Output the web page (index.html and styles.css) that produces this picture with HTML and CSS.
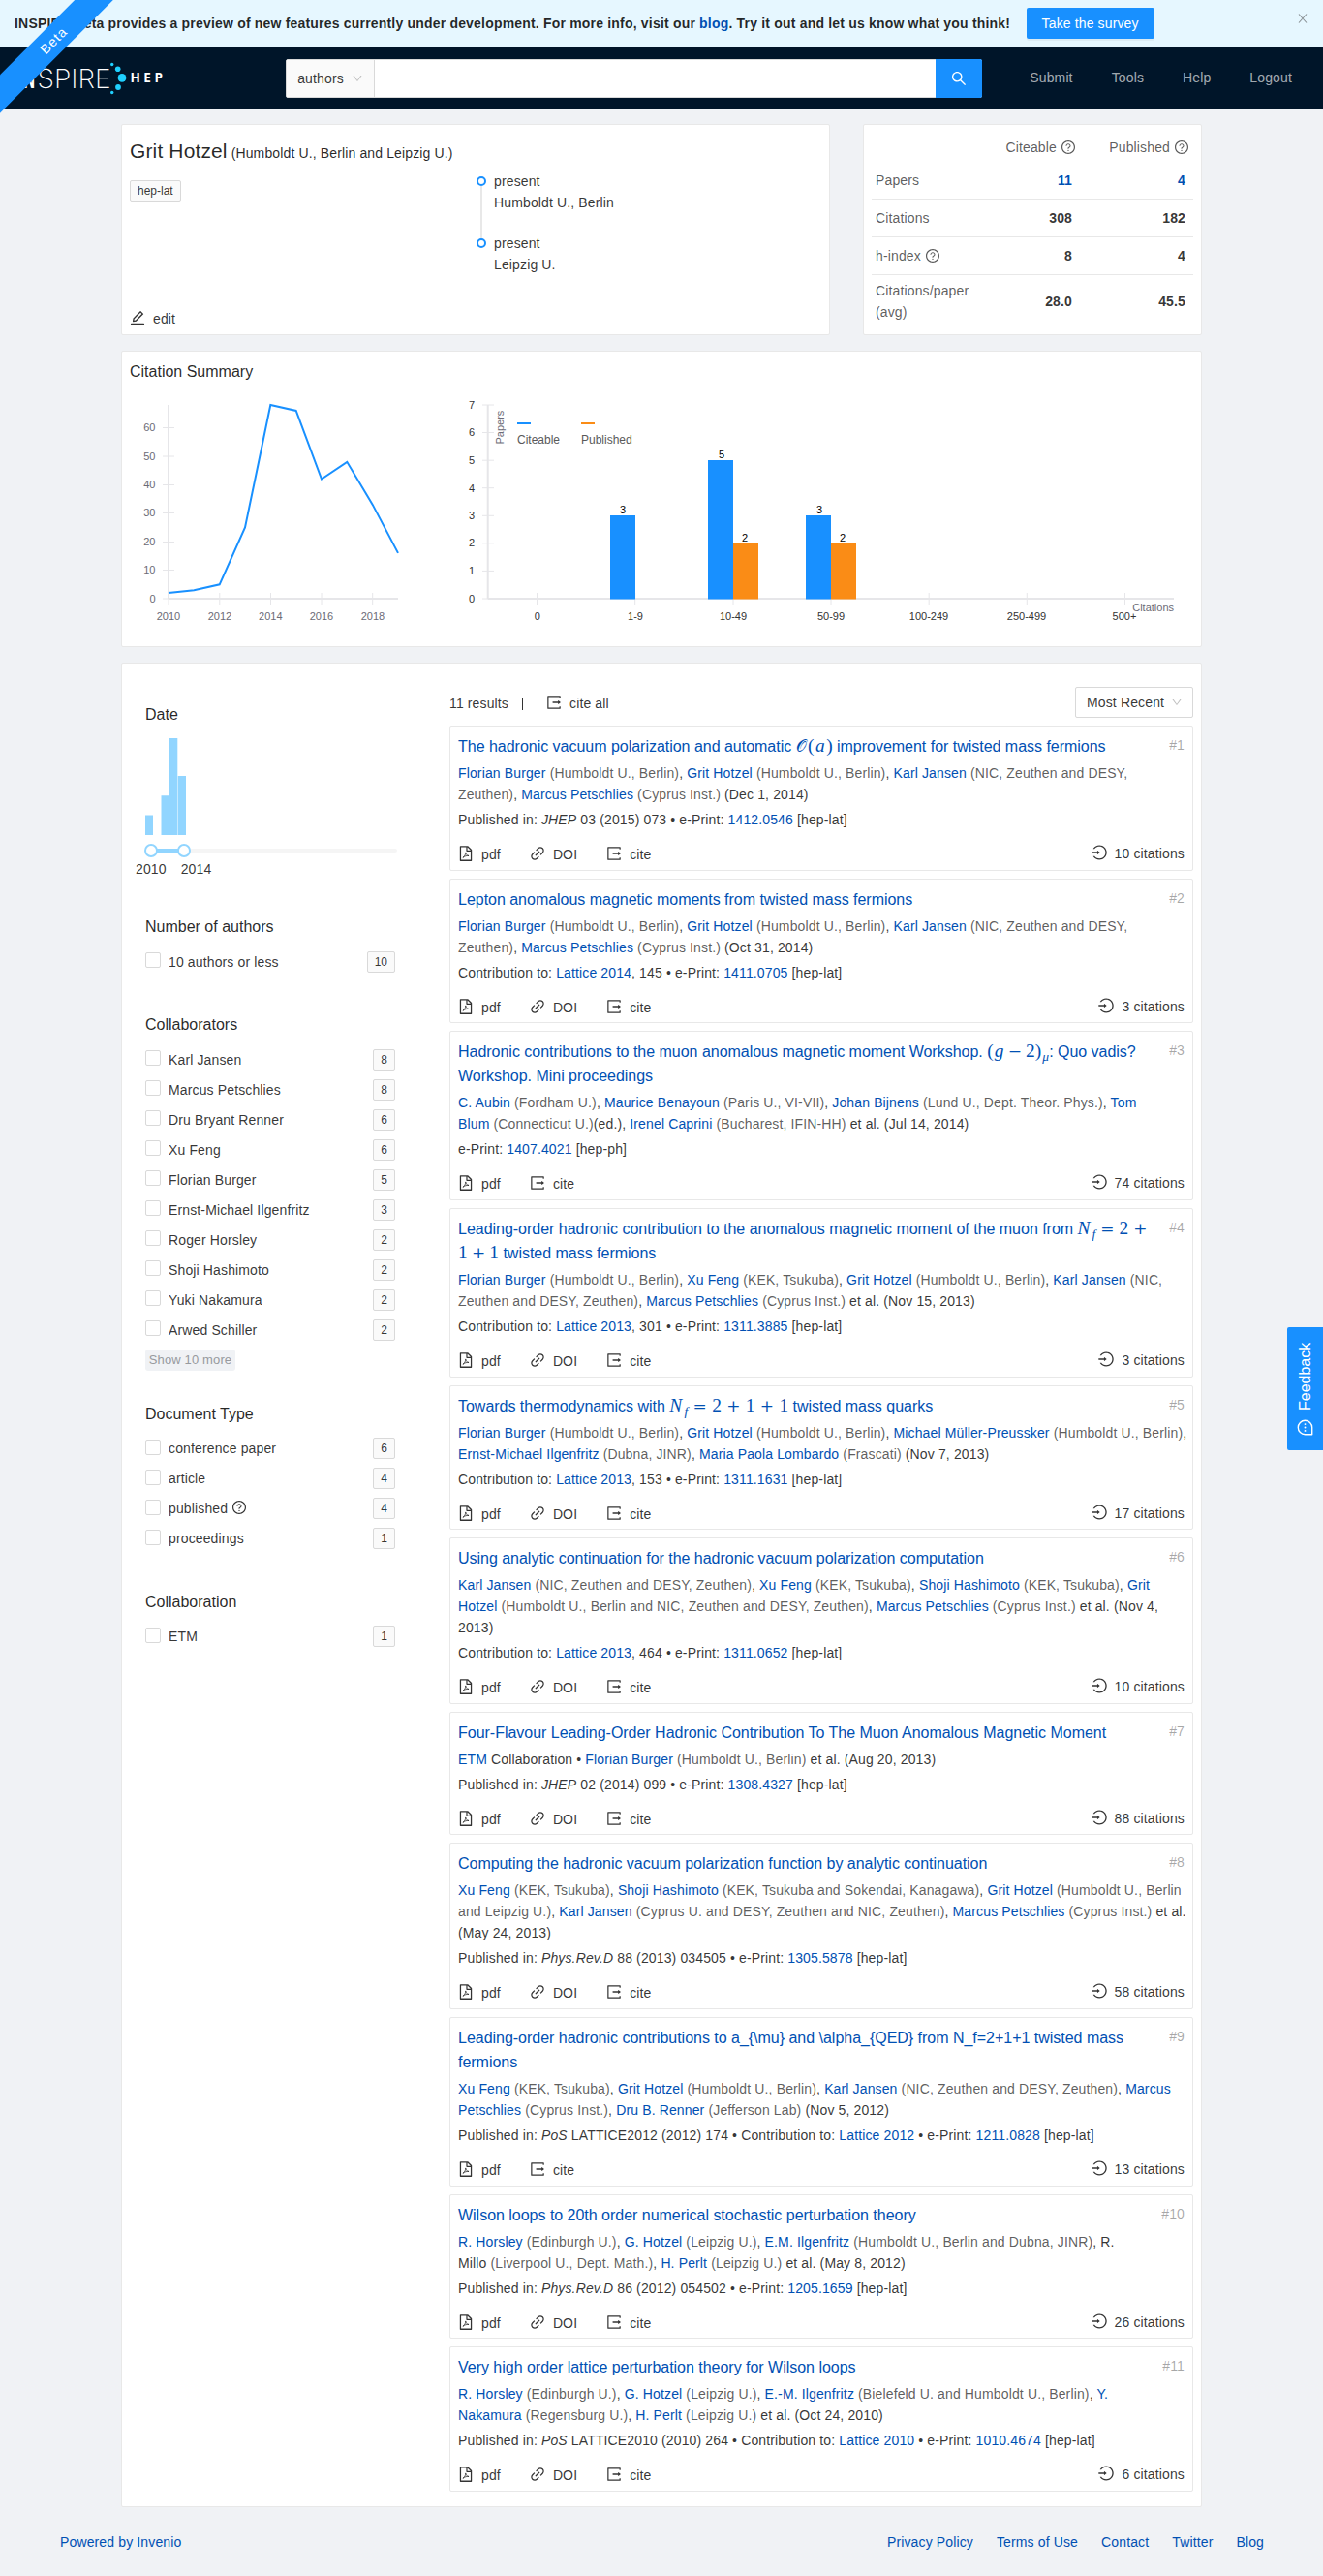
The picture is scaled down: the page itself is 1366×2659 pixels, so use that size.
FILE: index.html
```html
<!DOCTYPE html>
<html lang="en">
<head>
<meta charset="utf-8">
<title>Grit Hotzel - INSPIRE</title>
<link rel="stylesheet" href="styles.css">
</head>
<body>
<svg class="sprite" width="0" height="0" aria-hidden="true">
  <symbol id="i-help" viewBox="0 0 1024 1024"><path d="M512 64C264.6 64 64 264.6 64 512s200.6 448 448 448 448-200.6 448-448S759.4 64 512 64zm0 820c-205.4 0-372-166.6-372-372s166.6-372 372-372 372 166.6 372 372-166.6 372-372 372z"/><path d="M623.6 316.7C593.6 290.4 554 276 512 276s-81.6 14.5-111.6 40.7C369.2 344 352 380.7 352 420v7.6c0 4.4 3.6 8 8 8h48c4.4 0 8-3.6 8-8V420c0-44.1 43.1-80 96-80s96 35.9 96 80c0 31.1-22 59.6-56.1 72.7-21.2 8.1-39.2 22.3-52.1 40.9-13.1 19-19.9 41.8-19.9 64.9V620c0 4.4 3.6 8 8 8h48c4.4 0 8-3.6 8-8v-22.7a48.3 48.3 0 0 1 30.9-44.8c59-22.7 97.1-74.7 97.1-132.5.1-39.3-17.1-76-48.3-103.3zM472 732a40 40 0 1 0 80 0 40 40 0 1 0-80 0z"/></symbol>
  <symbol id="i-search" viewBox="0 0 1024 1024"><path d="M909.6 854.5L649.9 594.8C690.2 542.7 712 479 712 412c0-80.2-31.3-155.4-87.9-212.1-56.6-56.7-132-87.9-212.1-87.9s-155.5 31.3-212.1 87.9C143.2 256.5 112 331.8 112 412c0 80.1 31.3 155.5 87.9 212.1C256.5 680.8 331.8 712 412 712c67 0 130.6-21.8 182.7-62l259.7 259.6a8.2 8.2 0 0 0 11.6 0l43.6-43.5a8.2 8.2 0 0 0 0-11.6zM570.4 570.4C528 612.7 471.8 636 412 636s-116-23.3-158.4-65.6C211.3 528 188 471.8 188 412s23.3-116.1 65.6-158.4C296 211.3 352.2 188 412 188s116.1 23.2 158.4 65.6S636 352.2 636 412s-23.3 116.1-65.6 158.4z"/></symbol>
  <symbol id="i-down" viewBox="0 0 1024 1024"><path d="M884 256h-75c-5.1 0-9.9 2.5-12.9 6.6L512 654.2 227.9 262.6c-3-4.1-7.8-6.6-12.9-6.6h-75c-6.5 0-10.3 7.4-6.5 12.7l352.6 486.1c12.8 17.6 39 17.6 51.7 0l352.6-486.1c3.9-5.3.1-12.7-6.4-12.7z"/></symbol>
  <symbol id="i-edit" viewBox="0 0 1024 1024"><path d="M257.7 752c2 0 4-.2 6-.5L431.9 722c2-.4 3.9-1.3 5.3-2.8l423.9-423.9a9.96 9.96 0 0 0 0-14.1L694.9 114.9c-1.9-1.9-4.4-2.9-7.1-2.9s-5.2 1-7.1 2.9L256.8 538.8c-1.5 1.5-2.4 3.3-2.8 5.3l-29.5 168.2a33.5 33.5 0 0 0 9.4 29.8c6.6 6.4 14.9 9.9 23.8 9.9zm67.4-174.4L687.8 215l73.3 73.3-362.7 362.6-88.9 15.7 15.6-89zM880 836H144c-17.7 0-32 14.3-32 32v36c0 4.4 3.6 8 8 8h784c4.4 0 8-3.6 8-8v-36c0-17.7-14.3-32-32-32z"/></symbol>
  <symbol id="i-link" viewBox="0 0 1024 1024"><path d="M574 665.4a8.03 8.03 0 0 0-11.3 0L446.5 781.6c-53.8 53.8-144.6 59.5-204 0-59.5-59.5-53.8-150.2 0-204l116.2-116.2c3.1-3.1 3.1-8.2 0-11.3l-39.8-39.8a8.03 8.03 0 0 0-11.3 0L191.4 526.5c-84.6 84.6-84.6 221.5 0 306s221.5 84.6 306 0l116.2-116.2c3.1-3.1 3.1-8.2 0-11.3L574 665.4zm258.6-474c-84.6-84.6-221.5-84.6-306 0L410.3 307.6a8.03 8.03 0 0 0 0 11.3l39.7 39.7c3.1 3.1 8.2 3.1 11.3 0l116.2-116.2c53.8-53.8 144.6-59.5 204 0 59.5 59.5 53.8 150.2 0 204L665.3 562.6a8.03 8.03 0 0 0 0 11.3l39.8 39.8c3.1 3.1 8.2 3.1 11.3 0l116.2-116.2c84.5-84.6 84.5-221.5 0-306.1zM610.1 372.3a8.03 8.03 0 0 0-11.3 0L372.3 598.7a8.03 8.03 0 0 0 0 11.3l39.6 39.6c3.1 3.1 8.2 3.1 11.3 0l226.4-226.4c3.1-3.1 3.1-8.2 0-11.3l-39.5-39.6z"/></symbol>
  <symbol id="i-export" viewBox="0 0 1024 1024"><path d="M888.3 757.4h-53.8c-4.2 0-7.7 3.5-7.7 7.7v61.8H197.1V197.1h629.8v61.8c0 4.2 3.5 7.7 7.7 7.7h53.8c4.2 0 7.7-3.4 7.7-7.7V158.7c0-17-13.7-30.7-30.7-30.7H158.7c-17 0-30.7 13.7-30.7 30.7v706.6c0 17 13.7 30.7 30.7 30.7h706.6c17 0 30.7-13.7 30.7-30.7V765.1c0-4.3-3.5-7.7-7.7-7.7zm18.6-251.7L765 393.7c-5.3-4.2-13-.4-13 6.3v76H438c-4.4 0-8 3.6-8 8v56c0 4.4 3.6 8 8 8h314v76c0 6.7 7.8 10.5 13 6.3l141.9-112a8 8 0 0 0 0-12.6z"/></symbol>
  <symbol id="i-login" viewBox="0 0 1024 1024"><path d="M521.7 82c-152.5-.4-286.7 78.5-363.4 197.7-3.4 5.3.4 12.3 6.7 12.3h70.3c4.8 0 9.3-2.1 12.3-5.8 7-8.5 14.5-16.7 22.4-24.5 32.6-32.5 70.5-58.1 112.7-75.9 43.6-18.4 90-27.8 137.9-27.8 47.9 0 94.3 9.3 137.9 27.8 42.2 17.8 80.1 43.4 112.7 75.9 32.6 32.5 58.1 70.4 76 112.5C865.7 417.8 875 464.1 875 512c0 47.9-9.4 94.2-27.8 137.8-17.8 42.1-43.4 80-76 112.5s-70.5 58.1-112.7 75.9A352.8 352.8 0 0 1 520.6 866c-47.9 0-94.3-9.4-137.9-27.8A353.84 353.84 0 0 1 270 762.3c-7.9-7.9-15.3-16.1-22.4-24.5-3-3.7-7.6-5.8-12.3-5.8H165c-6.3 0-10.2 7-6.7 12.3C234.9 863.2 368.5 942 520.6 942c236.2 0 428-190.1 430.4-425.6C953.4 277.1 761.3 82.6 521.7 82zM395.02 624v-76h-314c-4.4 0-8-3.6-8-8v-56c0-4.4 3.6-8 8-8h314v-76c0-6.7 7.8-10.5 13-6.3l141.9 112a8 8 0 0 1 0 12.6l-141.9 112c-5.2 4.1-13 .4-13-6.3z"/></symbol>
  <symbol id="i-pdf" viewBox="0 0 1024 1024"><path d="M854.6 288.6L639.4 73.4c-6-6-14.1-9.4-22.6-9.4H192c-17.7 0-32 14.3-32 32v832c0 17.7 14.3 32 32 32h640c17.7 0 32-14.3 32-32V311.3c0-8.5-3.4-16.7-9.4-22.7zM790.2 326H602V137.8L790.2 326zm1.8 562H232V136h302v216a42 42 0 0 0 42 42h216v494z"/><path d="M335 760c90-50 170-190 165-310 10 110 70 190 185 200-120-10-250 20-350 110z" fill="none" stroke="currentColor" stroke-width="44" stroke-linejoin="round"/></symbol>
</svg>

<div class="ribbon">Beta</div>

<div class="banner">
  <strong>INSPIRE Beta provides a preview of new features currently under development. For more info, visit our <a>blog</a>. Try it out and let us know what you think!</strong>
  <a class="survey">Take the survey</a>
  <svg class="close" viewBox="0 0 10 10"><path d="M1 .5l8 9M9 .5l-8 9" fill="none" stroke="currentColor" stroke-width="1.1"/></svg>
</div>

<header class="nav">
  <svg class="logo" width="150" height="40" viewBox="0 0 150 40">
    <text class="logo-in" x="0" y="31" textLength="16" lengthAdjust="spacingAndGlyphs">IN</text>
    <text class="logo-spire" x="18.5" y="31" textLength="76" lengthAdjust="spacingAndGlyphs">SPIRE</text>
    <g class="logo-dots"><circle cx="95.7" cy="6.5" r="1.7"/><circle cx="101.7" cy="11.3" r="2.8"/><circle cx="106" cy="20.3" r="4.4"/><circle cx="102" cy="30" r="2.9"/><circle cx="95.7" cy="35.5" r="1.7"/></g>
    <text class="logo-hep" x="114.5" y="25.2">HEP</text>
  </svg>
  <div class="search">
    <div class="scope">authors <svg class="caret"><use href="#i-down"/></svg></div>
    <div class="query"></div>
    <div class="go"><svg><use href="#i-search"/></svg></div>
  </div>
  <nav class="menu"><a>Submit</a><a>Tools</a><a>Help</a><a>Logout</a></nav>
</header>

<main class="page">
  <section class="top">
    <div class="card author">
      <h2>Grit Hotzel <small>(Humboldt U., Berlin and Leipzig U.)</small></h2>
      <div class="author-body">
        <div><span class="tag">hep-lat</span></div>
        <ul class="timeline">
          <li>present<br>Humboldt U., Berlin</li>
          <li>present<br>Leipzig U.</li>
        </ul>
      </div>
      <a class="act edit"><svg><use href="#i-edit"/></svg>edit</a>
    </div>
    <div class="card stats">
      <table>
        <tr class="head"><td></td><td>Citeable <svg class="help"><use href="#i-help"/></svg></td><td>Published <svg class="help"><use href="#i-help"/></svg></td></tr>
        <tr><td>Papers</td><td><a>11</a></td><td><a>4</a></td></tr>
        <tr><td>Citations</td><td>308</td><td>182</td></tr>
        <tr><td>h-index <svg class="help"><use href="#i-help"/></svg></td><td>8</td><td>4</td></tr>
        <tr class="avg"><td>Citations/paper (avg)</td><td>28.0</td><td>45.5</td></tr>
      </table>
    </div>
  </section>

  <section class="card summary">
    <h3>Citation Summary</h3>
    <div class="charts">
      <svg class="chart years" width="300" height="250" viewBox="126 405 300 250">
        <path class="axis" d="M174 418V618M174 618H411"/>
        <path class="tick" d="M168 441.5h12M168 471h12M168 500.5h12M168 529.5h12M168 559.5h12M168 588.5h12M168 618h12M174 612v12M226.8 612v12M279.5 612v12M332 612v12M384.7 612v12"/>
        <polyline class="line" points="174,612.1 200.3,609.2 226.7,603.3 253,544.5 279.3,418 305.7,423.9 332,494.5 358.3,476.8 384.7,520.9 411,570.9"/>
        <g class="lab-y"><text x="160.5" y="445">60</text><text x="160.5" y="474.5">50</text><text x="160.5" y="504">40</text><text x="160.5" y="533">30</text><text x="160.5" y="563">20</text><text x="160.5" y="592">10</text><text x="160.5" y="622">0</text></g>
        <g class="lab-x"><text x="174" y="640">2010</text><text x="227" y="640">2012</text><text x="279.3" y="640">2014</text><text x="332" y="640">2016</text><text x="385" y="640">2018</text></g>
      </svg>
      <svg class="chart bars" width="760" height="250" viewBox="470 405 760 250">
        <path class="axis" d="M503.7 418V618M503.7 618H1212"/>
        <path class="tick" d="M498 418h12M498 446.5h12M498 475.2h12M498 503.7h12M498 532.3h12M498 560.8h12M498 589.4h12M498 618h12M554.5 612v12M655.7 612v12M757 612v12M858 612v12M959.2 612v12M1060.3 612v12M1161.5 612v12"/>
        <g class="blue"><rect x="630" y="532" width="26" height="86.5"/><rect x="731" y="475" width="26" height="143.5"/><rect x="832" y="532" width="26" height="86.5"/></g>
        <g class="orange"><rect x="757" y="560.5" width="26" height="58"/><rect x="858" y="560.5" width="26" height="58"/></g>
        <g class="lab-y"><text x="490" y="422">7</text><text x="490" y="450">6</text><text x="490" y="479">5</text><text x="490" y="507.500">4</text><text x="490" y="536">3</text><text x="490" y="564">2</text><text x="490" y="593">1</text><text x="490" y="622">0</text></g>
        <g class="lab-x"><text x="554.7" y="640">0</text><text x="656" y="640">1-9</text><text x="757" y="640">10-49</text><text x="858" y="640">50-99</text><text x="959" y="640">100-249</text><text x="1060" y="640">250-499</text><text x="1161" y="640">500+</text></g>
        <g class="val"><text x="643" y="530">3</text><text x="745" y="473">5</text><text x="769" y="559">2</text><text x="846" y="530">3</text><text x="870" y="559">2</text></g>
        <text class="cap" x="1212" y="631" text-anchor="end">Citations</text>
        <text class="cap" transform="translate(520 458.500) rotate(-90)">Papers</text>
        <path d="M534 437h14" stroke="#1890ff" stroke-width="2"/><path d="M600 437h14" stroke="#fa8c16" stroke-width="2"/>
        <text class="leg" x="534" y="458">Citeable</text><text class="leg" x="600" y="458">Published</text>
      </svg>
    </div>
  </section>

  <section class="card results">
    <aside class="facets">
      <div class="facet date">
        <h3>Date</h3>
        <svg class="hist" width="260" height="100"><path d="M0 79.500h8V100H0zM16.500 59.300h8.500V100h-8.500zM25 0h8.300v100H25zM33.800 39h8.200v61h-8.200z"/></svg>
        <div class="slider"><i></i><i></i></div>
        <div class="range"><span>2010</span><span>2014</span></div>
      </div>
      <div class="facet"><h3>Number of authors</h3>
        <label><i></i>10 authors or less<b>10</b></label></div>
      <div class="facet more"><h3>Collaborators</h3>
        <label><i></i>Karl Jansen<b>8</b></label>
        <label><i></i>Marcus Petschlies<b>8</b></label>
        <label><i></i>Dru Bryant Renner<b>6</b></label>
        <label><i></i>Xu Feng<b>6</b></label>
        <label><i></i>Florian Burger<b>5</b></label>
        <label><i></i>Ernst-Michael Ilgenfritz<b>3</b></label>
        <label><i></i>Roger Horsley<b>2</b></label>
        <label><i></i>Shoji Hashimoto<b>2</b></label>
        <label><i></i>Yuki Nakamura<b>2</b></label>
        <label><i></i>Arwed Schiller<b>2</b></label>
        <span class="show">Show 10 more</span></div>
      <div class="facet"><h3>Document Type</h3>
        <label><i></i>conference paper<b>6</b></label>
        <label><i></i>article<b>4</b></label>
        <label><i></i>published&nbsp;<svg class="help"><use href="#i-help"/></svg><b>4</b></label>
        <label><i></i>proceedings<b>1</b></label></div>
      <div class="facet"><h3>Collaboration</h3>
        <label><i></i>ETM<b>1</b></label></div>
    </aside>

    <div class="list">
      <div class="toolbar"><span>11 results</span><span class="bar"></span><a class="act"><svg><use href="#i-export"/></svg>cite all</a>
        <div class="sort">Most Recent <svg class="caret"><use href="#i-down"/></svg></div></div>

      <article><span class="num">#1</span>
        <h4>The hadronic vacuum polarization and automatic <span class="m m1"><span class="cal">𝒪</span>(<em>a</em>)</span> improvement for twisted mass fermions</h4>
        <p class="au"><a>Florian Burger</a> <s>(Humboldt U., Berlin)</s>, <a>Grit Hotzel</a> <s>(Humboldt U., Berlin)</s>, <a>Karl Jansen</a> <s>(NIC, Zeuthen and DESY,<br>Zeuthen)</s>, <a>Marcus Petschlies</a> <s>(Cyprus Inst.)</s> (Dec 1, 2014)</p>
        <p>Published in: <em>JHEP</em> 03 (2015) 073 • e-Print: <a>1412.0546</a> [hep-lat]</p>
        <footer><span class="act"><svg><use href="#i-pdf"/></svg>pdf</span><span class="act"><svg><use href="#i-link"/></svg>DOI</span><span class="act"><svg><use href="#i-export"/></svg>cite</span><span class="act cited"><svg><use href="#i-login"/></svg>10 citations</span></footer></article>

      <article><span class="num">#2</span>
        <h4>Lepton anomalous magnetic moments from twisted mass fermions</h4>
        <p class="au"><a>Florian Burger</a> <s>(Humboldt U., Berlin)</s>, <a>Grit Hotzel</a> <s>(Humboldt U., Berlin)</s>, <a>Karl Jansen</a> <s>(NIC, Zeuthen and DESY,<br>Zeuthen)</s>, <a>Marcus Petschlies</a> <s>(Cyprus Inst.)</s> (Oct 31, 2014)</p>
        <p>Contribution to: <a>Lattice 2014</a>, 145 • e-Print: <a>1411.0705</a> [hep-lat]</p>
        <footer><span class="act"><svg><use href="#i-pdf"/></svg>pdf</span><span class="act"><svg><use href="#i-link"/></svg>DOI</span><span class="act"><svg><use href="#i-export"/></svg>cite</span><span class="act cited"><svg><use href="#i-login"/></svg>3 citations</span></footer></article>

      <article><span class="num">#3</span>
        <h4>Hadronic contributions to the muon anomalous magnetic moment Workshop. <span class="m m3">(<em>g</em><span class="op">−</span>2)<sub><em>μ</em></sub></span>: Quo vadis?<br>Workshop. Mini proceedings</h4>
        <p class="au"><a>C. Aubin</a> <s>(Fordham U.)</s>, <a>Maurice Benayoun</a> <s>(Paris U., VI-VII)</s>, <a>Johan Bijnens</a> <s>(Lund U., Dept. Theor. Phys.)</s>, <a>Tom<br>Blum</a> <s>(Connecticut U.)</s>(ed.), <a>Irenel Caprini</a> <s>(Bucharest, IFIN-HH)</s> et al. (Jul 14, 2014)</p>
        <p>e-Print: <a>1407.4021</a> [hep-ph]</p>
        <footer><span class="act"><svg><use href="#i-pdf"/></svg>pdf</span><span class="act"><svg><use href="#i-export"/></svg>cite</span><span class="act cited"><svg><use href="#i-login"/></svg>74 citations</span></footer></article>

      <article><span class="num">#4</span>
        <h4>Leading-order hadronic contribution to the anomalous magnetic moment of the muon from <span class="m m4"><em>N</em><sub><em>f</em></sub><span class="op">=</span>2<span class="op">+</span></span><br><span class="m m4b">1<span class="op">+</span>1</span> twisted mass fermions</h4>
        <p class="au"><a>Florian Burger</a> <s>(Humboldt U., Berlin)</s>, <a>Xu Feng</a> <s>(KEK, Tsukuba)</s>, <a>Grit Hotzel</a> <s>(Humboldt U., Berlin)</s>, <a>Karl Jansen</a> <s>(NIC,<br>Zeuthen and DESY, Zeuthen)</s>, <a>Marcus Petschlies</a> <s>(Cyprus Inst.)</s> et al. (Nov 15, 2013)</p>
        <p>Contribution to: <a>Lattice 2013</a>, 301 • e-Print: <a>1311.3885</a> [hep-lat]</p>
        <footer><span class="act"><svg><use href="#i-pdf"/></svg>pdf</span><span class="act"><svg><use href="#i-link"/></svg>DOI</span><span class="act"><svg><use href="#i-export"/></svg>cite</span><span class="act cited"><svg><use href="#i-login"/></svg>3 citations</span></footer></article>

      <article><span class="num">#5</span>
        <h4>Towards thermodynamics with <span class="m m5"><em>N</em><sub><em>f</em></sub><span class="op">=</span>2<span class="op">+</span>1<span class="op">+</span>1</span> twisted mass quarks</h4>
        <p class="au"><a>Florian Burger</a> <s>(Humboldt U., Berlin)</s>, <a>Grit Hotzel</a> <s>(Humboldt U., Berlin)</s>, <a>Michael Müller-Preussker</a> <s>(Humboldt U., Berlin)</s>,<br><a>Ernst-Michael Ilgenfritz</a> <s>(Dubna, JINR)</s>, <a>Maria Paola Lombardo</a> <s>(Frascati)</s> (Nov 7, 2013)</p>
        <p>Contribution to: <a>Lattice 2013</a>, 153 • e-Print: <a>1311.1631</a> [hep-lat]</p>
        <footer><span class="act"><svg><use href="#i-pdf"/></svg>pdf</span><span class="act"><svg><use href="#i-link"/></svg>DOI</span><span class="act"><svg><use href="#i-export"/></svg>cite</span><span class="act cited"><svg><use href="#i-login"/></svg>17 citations</span></footer></article>

      <article><span class="num">#6</span>
        <h4>Using analytic continuation for the hadronic vacuum polarization computation</h4>
        <p class="au"><a>Karl Jansen</a> <s>(NIC, Zeuthen and DESY, Zeuthen)</s>, <a>Xu Feng</a> <s>(KEK, Tsukuba)</s>, <a>Shoji Hashimoto</a> <s>(KEK, Tsukuba)</s>, <a>Grit<br>Hotzel</a> <s>(Humboldt U., Berlin and NIC, Zeuthen and DESY, Zeuthen)</s>, <a>Marcus Petschlies</a> <s>(Cyprus Inst.)</s> et al. (Nov 4,<br>2013)</p>
        <p>Contribution to: <a>Lattice 2013</a>, 464 • e-Print: <a>1311.0652</a> [hep-lat]</p>
        <footer><span class="act"><svg><use href="#i-pdf"/></svg>pdf</span><span class="act"><svg><use href="#i-link"/></svg>DOI</span><span class="act"><svg><use href="#i-export"/></svg>cite</span><span class="act cited"><svg><use href="#i-login"/></svg>10 citations</span></footer></article>

      <article><span class="num">#7</span>
        <h4>Four-Flavour Leading-Order Hadronic Contribution To The Muon Anomalous Magnetic Moment</h4>
        <p class="au"><a>ETM</a> Collaboration • <a>Florian Burger</a> <s>(Humboldt U., Berlin)</s> et al. (Aug 20, 2013)</p>
        <p>Published in: <em>JHEP</em> 02 (2014) 099 • e-Print: <a>1308.4327</a> [hep-lat]</p>
        <footer><span class="act"><svg><use href="#i-pdf"/></svg>pdf</span><span class="act"><svg><use href="#i-link"/></svg>DOI</span><span class="act"><svg><use href="#i-export"/></svg>cite</span><span class="act cited"><svg><use href="#i-login"/></svg>88 citations</span></footer></article>

      <article><span class="num">#8</span>
        <h4>Computing the hadronic vacuum polarization function by analytic continuation</h4>
        <p class="au"><a>Xu Feng</a> <s>(KEK, Tsukuba)</s>, <a>Shoji Hashimoto</a> <s>(KEK, Tsukuba and Sokendai, Kanagawa)</s>, <a>Grit Hotzel</a> <s>(Humboldt U., Berlin<br>and Leipzig U.)</s>, <a>Karl Jansen</a> <s>(Cyprus U. and DESY, Zeuthen and NIC, Zeuthen)</s>, <a>Marcus Petschlies</a> <s>(Cyprus Inst.)</s> et al.<br>(May 24, 2013)</p>
        <p>Published in: <em>Phys.Rev.D</em> 88 (2013) 034505 • e-Print: <a>1305.5878</a> [hep-lat]</p>
        <footer><span class="act"><svg><use href="#i-pdf"/></svg>pdf</span><span class="act"><svg><use href="#i-link"/></svg>DOI</span><span class="act"><svg><use href="#i-export"/></svg>cite</span><span class="act cited"><svg><use href="#i-login"/></svg>58 citations</span></footer></article>

      <article><span class="num">#9</span>
        <h4>Leading-order hadronic contributions to a_{\mu} and \alpha_{QED} from N_f=2+1+1 twisted mass<br>fermions</h4>
        <p class="au"><a>Xu Feng</a> <s>(KEK, Tsukuba)</s>, <a>Grit Hotzel</a> <s>(Humboldt U., Berlin)</s>, <a>Karl Jansen</a> <s>(NIC, Zeuthen and DESY, Zeuthen)</s>, <a>Marcus<br>Petschlies</a> <s>(Cyprus Inst.)</s>, <a>Dru B. Renner</a> <s>(Jefferson Lab)</s> (Nov 5, 2012)</p>
        <p>Published in: <em>PoS</em> LATTICE2012 (2012) 174 • Contribution to: <a>Lattice 2012</a> • e-Print: <a>1211.0828</a> [hep-lat]</p>
        <footer><span class="act"><svg><use href="#i-pdf"/></svg>pdf</span><span class="act"><svg><use href="#i-export"/></svg>cite</span><span class="act cited"><svg><use href="#i-login"/></svg>13 citations</span></footer></article>

      <article><span class="num">#10</span>
        <h4>Wilson loops to 20th order numerical stochastic perturbation theory</h4>
        <p class="au"><a>R. Horsley</a> <s>(Edinburgh U.)</s>, <a>G. Hotzel</a> <s>(Leipzig U.)</s>, <a>E.M. Ilgenfritz</a> <s>(Humboldt U., Berlin and Dubna, JINR)</s>, R.<br>Millo <s>(Liverpool U., Dept. Math.)</s>, <a>H. Perlt</a> <s>(Leipzig U.)</s> et al. (May 8, 2012)</p>
        <p>Published in: <em>Phys.Rev.D</em> 86 (2012) 054502 • e-Print: <a>1205.1659</a> [hep-lat]</p>
        <footer><span class="act"><svg><use href="#i-pdf"/></svg>pdf</span><span class="act"><svg><use href="#i-link"/></svg>DOI</span><span class="act"><svg><use href="#i-export"/></svg>cite</span><span class="act cited"><svg><use href="#i-login"/></svg>26 citations</span></footer></article>

      <article><span class="num">#11</span>
        <h4>Very high order lattice perturbation theory for Wilson loops</h4>
        <p class="au"><a>R. Horsley</a> <s>(Edinburgh U.)</s>, <a>G. Hotzel</a> <s>(Leipzig U.)</s>, <a>E.-M. Ilgenfritz</a> <s>(Bielefeld U. and Humboldt U., Berlin)</s>, <a>Y.<br>Nakamura</a> <s>(Regensburg U.)</s>, <a>H. Perlt</a> <s>(Leipzig U.)</s> et al. (Oct 24, 2010)</p>
        <p>Published in: <em>PoS</em> LATTICE2010 (2010) 264 • Contribution to: <a>Lattice 2010</a> • e-Print: <a>1010.4674</a> [hep-lat]</p>
        <footer><span class="act"><svg><use href="#i-pdf"/></svg>pdf</span><span class="act"><svg><use href="#i-link"/></svg>DOI</span><span class="act"><svg><use href="#i-export"/></svg>cite</span><span class="act cited"><svg><use href="#i-login"/></svg>6 citations</span></footer></article>
    </div>
  </section>
</main>

<footer class="site"><a>Powered by Invenio</a><div><a>Privacy Policy</a><a>Terms of Use</a><a>Contact</a><a>Twitter</a><a>Blog</a></div></footer>

<div class="feedback"><svg viewBox="0 0 16 16"><path d="M1.200 14.800V8A6.800 6.800 0 1 1 8 14.800z" fill="none" stroke="#fff" stroke-width="1.300" stroke-linejoin="round"/><g fill="#fff"><circle cx="4.800" cy="8" r=".9"/><circle cx="8" cy="8" r=".9"/><circle cx="11.200" cy="8" r=".9"/></g></svg>Feedback</div>
</body>
</html>
```
FILE: styles.css
```css
*, ::before, ::after { box-sizing: border-box; }
body {
  margin: 0;
  background: #f0f2f5;
  color: rgba(0, 0, 0, .8);
  font: 14px/22px "Liberation Sans", Arial, sans-serif;
  font-variant-numeric: tabular-nums;
  letter-spacing: .135px;
  position: relative;
  min-height: 2659px;
}
.sprite { position: absolute; }
svg { fill: currentColor; letter-spacing: 0; }
a { color: #0050b3; }
h2, h3, h4, p, ul { margin: 0; padding: 0; font-weight: 400; }
h3 { letter-spacing: 0; }
s { text-decoration: none; color: rgba(0, 0, 0, .65); }

.ribbon {
  position: absolute; z-index: 5; left: -51px; top: 34px;
  width: 200px; height: 28px; line-height: 28px;
  transform: rotate(-45deg); background: #1890ff; color: #fff;
  text-align: center; letter-spacing: 1px; padding-left: 18px;
}
.banner { height: 48px; background: #e6f7ff; display: flex; align-items: center; padding: 0 16px 0 15px; color: rgba(0, 0, 0, .85); }
.banner strong { letter-spacing: .19px; }
.banner .survey {
  margin-left: 16.500px; width: 132px; height: 32px; line-height: 32px; text-align: center;
  color: #fff; background: #1890ff; border-radius: 2px; box-shadow: 0 2px 0 rgba(0, 0, 0, .045);
}
.close { width: 10px; height: 10px; margin: 0 0 10px auto; color: #888f93; }

.nav { height: 64px; background: #001529; display: flex; align-items: center; padding: 0 32px 0 20px; }
.logo { flex: none; }
.logo text { fill: #fff; }
.logo-in { font: 700 28px "Liberation Sans"; }
.logo-spire { font: 200 27.500px Inter, sans-serif; }
.logo-hep { font: 700 13.500px "Open Sans", sans-serif; letter-spacing: 3.500px; }
.logo-dots { fill: #1fd0ff; }
.search { display: flex; width: 719px; height: 40px; margin: 2px 0 0 125px; background: #fff; border: 1px solid #d9d9d9; border-radius: 2px; }
.scope { width: 91px; display: flex; align-items: center; justify-content: center; gap: 8px; background: #fafafa; border-right: 1px solid #d9d9d9; }
.caret { width: 12px; height: 12px; color: #bfbfbf; }
.query { flex: 1; }
.go { width: 48px; height: 40px; margin: -1px; background: #1890ff; color: #fff; display: flex; align-items: center; justify-content: center; border-radius: 0 2px 2px 0; }
.go svg { width: 18px; height: 18px; }
.menu { margin-left: auto; display: flex; gap: 40px; }
.menu a { color: rgba(255, 255, 255, .65); }

.page { width: 1116px; margin: 16px 0 0 125px; }
.card { background: #fff; border: 1px solid #e8e8e8; border-radius: 2px; }
.top { display: grid; grid-template-columns: 732px 350px; justify-content: space-between; height: 218px; }
.author { padding: 12px 8px; display: flex; flex-direction: column; }
.author h2 { font-size: 21px; line-height: 30px; height: 30px; color: rgba(0, 0, 0, .85); }
.author small { font-size: 14px; line-height: 1; margin-left: -2px; }
.author-body { display: grid; grid-template-columns: 358px 1fr; margin-top: 5px; }
.tag { display: block; width: max-content; margin-top: 10px; font-size: 12px; line-height: 20px; letter-spacing: 0; padding: 0 7px; background: #fafafa; border: 1px solid #d9d9d9; border-radius: 2px; }
.timeline { list-style: none; }
.timeline li { position: relative; height: 64px; padding-left: 18px; }
.timeline li::before { content: ""; position: absolute; left: 0; top: 6px; width: 10px; height: 10px; border: 2px solid #1890ff; border-radius: 50%; }
.timeline li:first-child::after { content: ""; position: absolute; left: 4px; top: 16px; height: 54px; width: 2px; background: #e8e8e8; }
.act { display: inline-flex; align-items: center; gap: 7px; color: rgba(0, 0, 0, .8); }
.act svg { width: 18px; height: 18px; margin: -2px 0 0 -1px; }
.edit { margin-top: auto; height: 22px; margin-bottom: -7px; }
.help { width: 16px; height: 16px; vertical-align: -3px; }
.stats { padding: 7px 8px; }
.stats table { width: 332px; border-collapse: separate; border-spacing: 0; table-layout: fixed; }
.stats td { height: 39px; padding: 0 8px 0 4px; text-align: right; font-weight: 700; border-bottom: 1px solid #e8e8e8; }
.stats td:first-child { width: 98px; text-align: left; padding-right: 0; }
.stats td:first-child, .stats .head td { font-weight: 400; color: rgba(0, 0, 0, .65); }
.stats .head td { height: 31px; border: 0; padding-right: 4px; }
.stats .avg td { height: 53px; border: 0; }

.summary { margin-top: 16px; height: 306px; padding: 8px 0; }
.summary h3 { margin-left: 8px; font-size: 16px; line-height: 25px; color: rgba(0, 0, 0, .85); }
.charts { display: flex; gap: 44px; margin-top: 9px; }
.chart { flex: none; }
.axis { fill: none; stroke: #e6e6e9; stroke-width: 2; }
.tick { fill: none; stroke: #e6e6e9; stroke-width: 1; }
.line { fill: none; stroke: #1890ff; stroke-width: 2; }
.chart text { font-size: 11px; }
.chart .lab-y { text-anchor: end; }
.chart .lab-x, .chart .val { text-anchor: middle; }
.years text { fill: #6b6b76; }
.bars text { fill: #333; }
.bars .val text { fill: #000; }
.bars .cap { fill: #6b6b76; }
.bars .leg { font-size: 12px; fill: #595959; }
.blue { fill: #1890ff; }
.orange { fill: #fa8c16; }

.results { margin-top: 16px; height: 1904px; padding: 24px 8px 16px 24px; display: flex; justify-content: space-between; }
.facets { width: 258px; padding-top: 15.500px; }
.facet { margin-bottom: 41.500px; }
.facet h3 { font-size: 16px; line-height: 25px; margin-bottom: 12.500px; color: rgba(0, 0, 0, .85); }
.facet label { display: flex; height: 22px; margin-bottom: 9px; align-items: center; }
.facet label i { width: 16px; height: 16px; margin: -3px 8px 0 0; border: 1px solid #d9d9d9; border-radius: 2px; background: #fff; }
.facet label b { margin-left: auto; min-width: 23px; height: 22px; font-weight: 400; font-size: 12px; line-height: 20px; letter-spacing: 0; text-align: center; padding: 0 7px; border: 1px solid #d9d9d9; border-radius: 2px; background: #fafafa; }
.facet label:last-child { margin-bottom: 0; }
.facet label .help { margin-top: -2px; }
.facet.more { margin-bottom: 32px; }
.show { display: block; width: 93px; height: 22px; background: #f0f2f5; color: #979a9e; font-size: 13px; text-align: center; border-radius: 3px; }
.hist { display: block; fill: #91d5ff; }
.slider { width: 260px; height: 4px; margin-top: 14px; border-radius: 2px; background: linear-gradient(to right, #91d5ff 36px, #f5f5f5 36px); display: flex; gap: 20px; align-items: center; }
.slider i { width: 14px; height: 14px; margin-left: -1px; margin-right: 1px; border: 2px solid #91d5ff; border-radius: 50%; background: #fff; }
.range { display: flex; gap: 15px; margin: 6px 0 0 -10px; }
.facet.date { margin-bottom: 36px; }

.list { width: 768px; }
.toolbar { height: 32px; display: flex; align-items: center; }
.toolbar > span, .toolbar > .act { position: relative; top: 1px; }
.bar { width: 1px; height: 13px; background: rgba(0, 0, 0, .8); margin: 0 24px 0 14px; }
.sort { margin-left: auto; width: 122px; height: 32px; line-height: 30px; border: 1px solid #d9d9d9; border-radius: 2px; padding-left: 11px; display: flex; align-items: center; gap: 7px; }
article { position: relative; border: 1px solid #e8e8e8; border-radius: 2px; margin-top: 8px; padding: 8px 8px 4.500px; }
article h4 { font-size: 16px; line-height: 25.100px; letter-spacing: -.02px; color: #0050b3; margin-right: 32px; white-space: nowrap; }
article p { margin-top: 4px; white-space: nowrap; }
article footer { display: flex; gap: 30px; margin-top: 14px; height: 22px; }
article .cited { margin-left: auto; margin-top: -2px; }
.num { position: absolute; right: 8px; top: 8px; color: rgba(0, 0, 0, .35); }
.m { display: inline-flex; align-items: baseline; justify-content: space-between; height: 20px; font: 19.400px/20px "Liberation Serif", serif; white-space: nowrap; }
.m sub { font-size: 13.500px; position: relative; top: 4px; vertical-align: baseline; }
.m .op { font-family: "DejaVu Serif", serif; font-size: 17px; margin: 0 3px; }
.m1 { width: 38px; }
.m1 .cal { font-size: 17px; }
.m3 { width: 64px; }
.m4 { width: 75px; }
.m4b { width: 42px; }
.m5 { width: 123px; }

footer.site { display: flex; justify-content: space-between; padding: 25px 61px 0 62px; }
footer.site div { display: flex; gap: 24px; }
.feedback {
  position: absolute; right: 0; top: 1370px; width: 37px; height: 127px;
  background: #1890ff; color: #fff; font-size: 16px; letter-spacing: 0; writing-mode: vertical-rl; transform: rotate(180deg);
  display: flex; align-items: center; padding-top: 15px; gap: 9px; border-radius: 0 2px 2px 0;
}
.feedback svg { width: 17px; height: 17px; transform: rotate(90deg); }
```
